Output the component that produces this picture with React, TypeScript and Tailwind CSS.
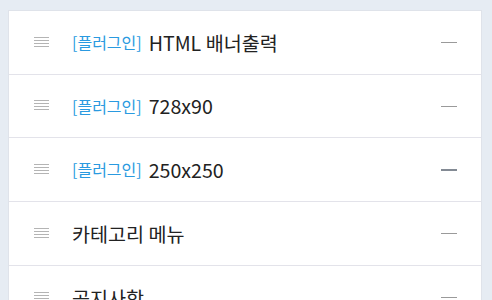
import React from 'react';

interface MenuItem {
  id: number;
  plugin: boolean;
  label: string;
  active?: boolean;
}

const items: MenuItem[] = [
  { id: 1, plugin: true, label: 'HTML 배너출력' },
  { id: 2, plugin: true, label: '728x90' },
  { id: 3, plugin: true, label: '250x250', active: true },
  { id: 4, plugin: false, label: '카테고리 메뉴' },
  { id: 5, plugin: false, label: '공지사항' },
];

// row heights incl. top divider
const rowHeights = ['h-[63px]', 'h-[63px]', 'h-[64px]', 'h-[64px]', 'h-[64px]'];

const DragHandle = () => (
  <svg width="15" height="12" viewBox="0 0 15 12" className="shrink-0">
    {[0.5, 3.5, 6.5, 9.5].map(y => (
      <line key={y} x1="0" y1={y} x2="15" y2={y} stroke="#b4b4b4" strokeWidth="1" />
    ))}
  </svg>
);

export default function App() {
  return (
    <div
      className="w-[492px] h-[300px] overflow-hidden bg-[#e6ecf3] pt-[10px] pl-[8px] pr-[10px]"
      style={{ fontFamily: '"Noto Sans CJK KR", "Noto Sans", sans-serif' }}
    >
      <div className="bg-white border border-[#dfe3ea]">
        {items.map((item, i) => (
          <div
            key={item.id}
            className={`${rowHeights[i]} flex items-center pl-[25px] pr-[24px] ${i > 0 ? 'border-t border-[#e3e3ea]' : ''}`}
          >
            <DragHandle />
            <div className="ml-[23px] flex items-center flex-1 min-w-0">
              {item.plugin && (
                <span className="text-[16px] text-[#2a9ae0] mr-[7px]">[플러그인]</span>
              )}
              <span className="text-[19.6px] text-[#222]">{item.label}</span>
            </div>
            <div
              className={`w-[16px] ${item.active ? 'h-[2px] bg-[#838a94]' : 'h-[1px] bg-[#9a9a9a]'}`}
            />
          </div>
        ))}
      </div>
    </div>
  );
}
